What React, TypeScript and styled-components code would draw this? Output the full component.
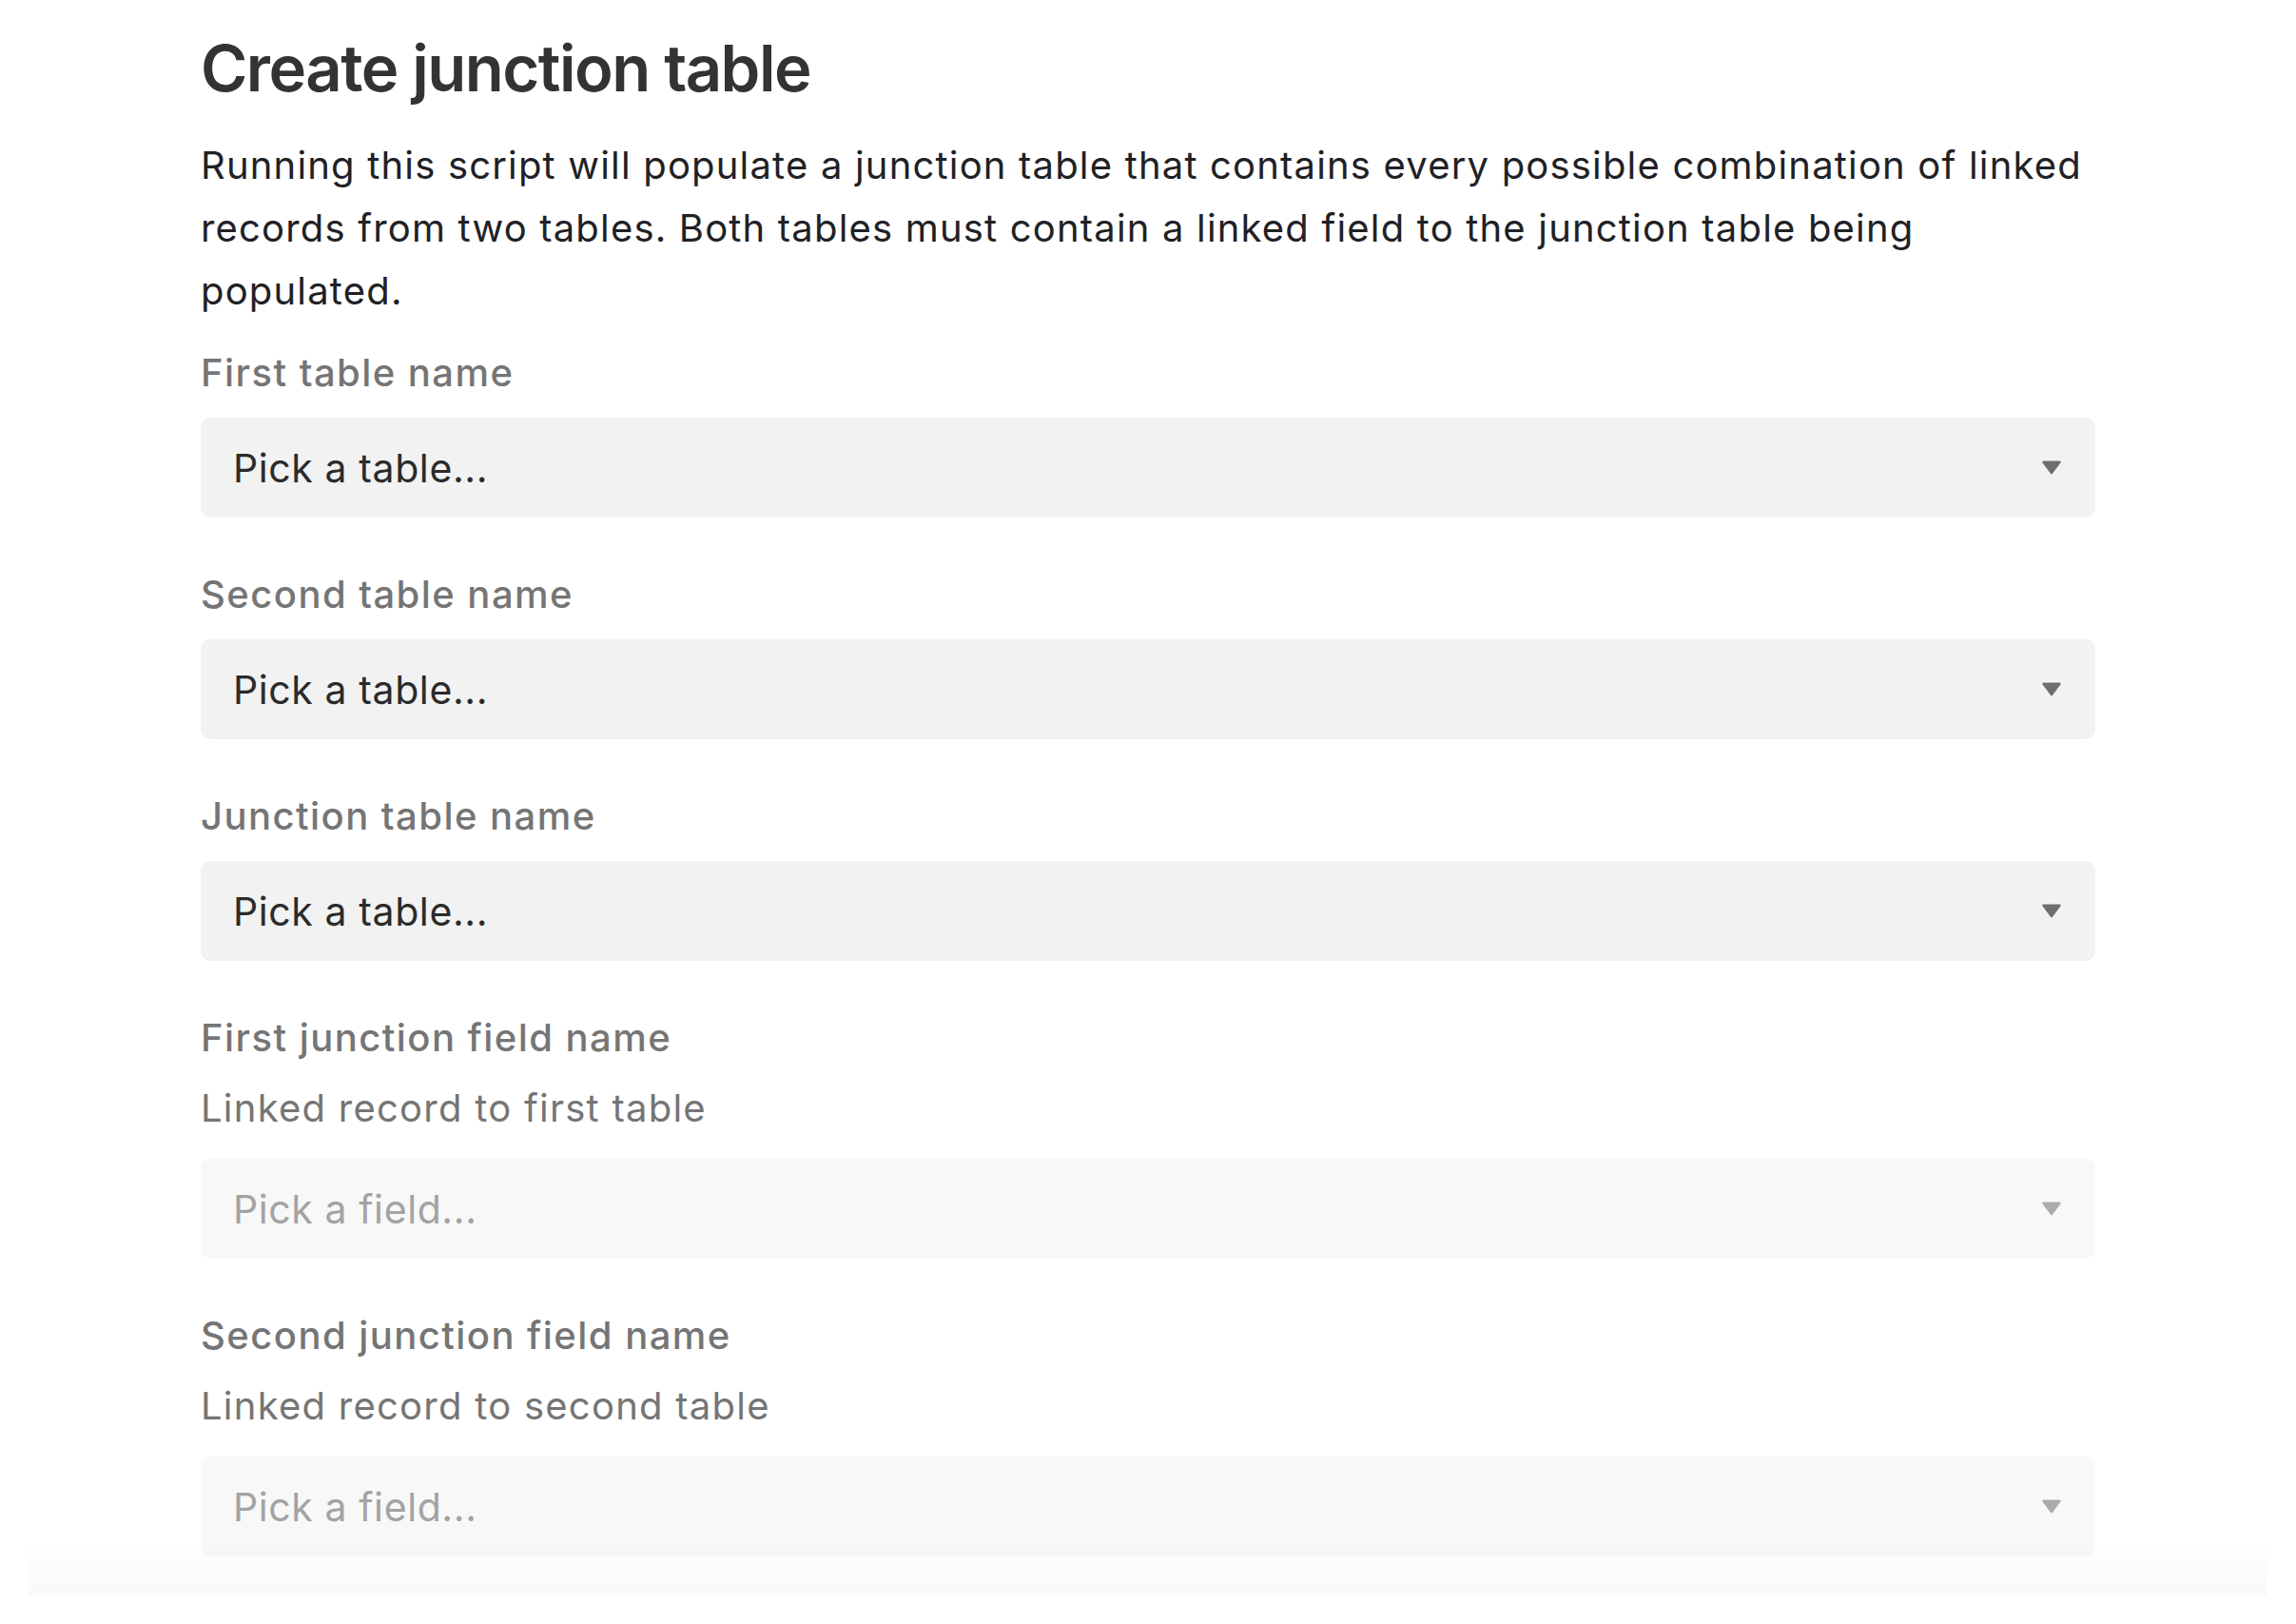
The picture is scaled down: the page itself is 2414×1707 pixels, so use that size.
import React from "react";
import styled, { createGlobalStyle } from "styled-components";

const GlobalStyle = createGlobalStyle`
  html, body {
    margin: 0;
    padding: 0;
    background: #ffffff;
  }
  body {
    font-family: Inter, "Noto Sans", "Liberation Sans", sans-serif;
    -webkit-font-smoothing: antialiased;
  }
`;

const Page = styled.div`
  position: relative;
  height: 1707px;
  overflow: hidden;
  background: #ffffff;
`;

const Content = styled.main`
  display: flex;
  flex-direction: column;
  padding: 30px 211px 0;
`;

const Title = styled.h1`
  margin: 0;
  font-size: 67px;
  line-height: 84px;
  font-weight: 600;
  letter-spacing: -1.5px;
  color: #333333;
`;

const Intro = styled.p`
  margin: 27px 0 0;
  font-size: 40px;
  line-height: 66px;
  font-weight: 400;
  letter-spacing: 1.18px;
  color: #1f2125;
`;

const Fields = styled.div`
  display: flex;
  flex-direction: column;
  gap: 57px;
  margin-top: 29px;
`;

const Field = styled.div`
  display: flex;
  flex-direction: column;
`;

const FieldLabel = styled.label`
  font-size: 40px;
  line-height: 48px;
  font-weight: 500;
  letter-spacing: 1.45px;
  color: #757575;
`;

const FieldHint = styled.div`
  margin-top: 26px;
  margin-bottom: 6px;
  font-size: 40px;
  line-height: 48px;
  font-weight: 400;
  letter-spacing: 1.25px;
  color: #757575;
`;

const SelectBox = styled.div<{ $disabled?: boolean }>`
  display: flex;
  align-items: center;
  justify-content: space-between;
  height: 105px;
  margin-top: 23px;
  padding: 0 36px 0 34px;
  border-radius: 10px;
  background: ${(p) => (p.$disabled ? "#f8f8f8" : "#f2f2f2")};
  color: ${(p) => (p.$disabled ? "#a3a3a3" : "#2b2b2b")};
  font-size: 41px;
  font-weight: 400;
  letter-spacing: 0.6px;
`;

const Caret = styled.svg<{ $disabled?: boolean }>`
  width: 20px;
  height: 15px;
  fill: ${(p) => (p.$disabled ? "#ababab" : "#6e6e6e")};
`;

const BottomFade = styled.div`
  position: absolute;
  left: 30px;
  right: 31px;
  top: 1617px;
  height: 60px;
  background: linear-gradient(
    to bottom,
    rgba(0, 0, 0, 0) 0%,
    rgba(0, 0, 0, 0.022) 100%
  );
  pointer-events: none;
`;

type FieldDef = {
  label: string;
  hint?: string;
  placeholder: string;
  disabled?: boolean;
};

const fields: FieldDef[] = [
  { label: "First table name", placeholder: "Pick a table..." },
  { label: "Second table name", placeholder: "Pick a table..." },
  { label: "Junction table name", placeholder: "Pick a table..." },
  {
    label: "First junction field name",
    hint: "Linked record to first table",
    placeholder: "Pick a field...",
    disabled: true,
  },
  {
    label: "Second junction field name",
    hint: "Linked record to second table",
    placeholder: "Pick a field...",
    disabled: true,
  },
];

const Select: React.FC<{ placeholder: string; disabled?: boolean }> = ({
  placeholder,
  disabled,
}) => (
  <SelectBox $disabled={disabled}>
    <span>{placeholder}</span>
    <Caret $disabled={disabled} viewBox="0 0 20 15">
      <path d="M1.5 0.5h17a1.2 1.2 0 0 1 0.9 2l-8.4 11.2a1.2 1.2 0 0 1 -2 0L0.6 2.5a1.2 1.2 0 0 1 0.9 -2z" />
    </Caret>
  </SelectBox>
);

export default function App() {
  return (
    <Page>
      <GlobalStyle />
      <Content>
        <Title>Create junction table</Title>
        <Intro>
          Running this script will populate a junction table that contains
          every possible combination of linked records from two tables. Both
          tables must contain a linked field to the junction table being
          populated.
        </Intro>
        <Fields>
          {fields.map((f) => (
            <Field key={f.label}>
              <FieldLabel>{f.label}</FieldLabel>
              {f.hint && <FieldHint>{f.hint}</FieldHint>}
              <Select placeholder={f.placeholder} disabled={f.disabled} />
            </Field>
          ))}
        </Fields>
      </Content>
      <BottomFade />
    </Page>
  );
}
